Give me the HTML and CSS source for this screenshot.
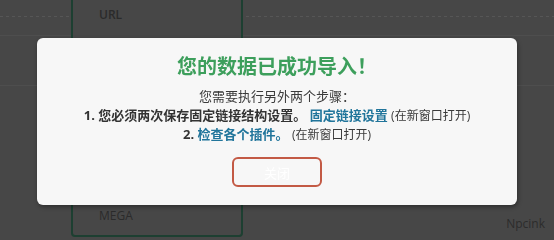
FILE: index.html
```html
<!DOCTYPE html>
<html lang="zh-CN">
<head>
<meta charset="utf-8">
<title>导入完成</title>
<link rel="stylesheet" href="styles.css">
</head>
<body>
<div class="page">
  <div class="row row-a"></div>
  <div class="row row-b"></div>
  <div class="card card-top"><span class="card-label">URL</span></div>
  <div class="card card-bottom"><span class="card-label">MEGA</span></div>
  <div class="mark">Npcink</div>
</div>

<div class="overlay">
  <div class="modal">
    <h2 class="modal-title">您的数据已成功导入！</h2>
    <div class="modal-body">
      <p class="line">您需要执行另外两个步骤：</p>
      <p class="line"><strong>1. 您必须两次保存固定链接结构设置。</strong> <a class="link" href="#">固定链接设置</a> <span class="note">(在新窗口打开)</span></p>
      <p class="line"><strong>2. <a class="link" href="#">检查各个插件。</a></strong> <span class="note">(在新窗口打开)</span></p>
    </div>
    <button class="btn" type="button">关闭</button>
  </div>
</div>
</body>
</html>
```

FILE: styles.css
```css
html, body {
  margin: 0;
  padding: 0;
  background: #474747;
  overflow: hidden;
}

body {
  font-family: "Open Sans", "Noto Sans CJK SC", sans-serif;
  color: #333;
}

.page {
  height: 240px;
  display: grid;
  grid-template-columns: 71px 172px 1fr;
  grid-template-rows: 36px 50px 1fr;
}

.row {
  grid-column: 1 / -1;
  border-bottom: 1px solid #4e4e4e;
}

.row-a {
  grid-row: 1;
  background-image: repeating-linear-gradient(to right, #565656 0 3px, transparent 3px 6px);
  background-size: 100% 1px;
  background-position: 0 16px;
  background-repeat: no-repeat;
}

.row-b {
  grid-row: 2;
}

.card {
  grid-column: 2;
  box-sizing: border-box;
  border: 2px solid #1d3f31;
  background: #474747;
  font-size: 12px;
  font-weight: 600;
  color: #2b2b2b;
  display: flex;
}

.card-label {
  padding-left: 26px;
}

.card-top {
  grid-row: 1 / 3;
  border-top: none;
  align-items: flex-start;
  padding-top: 6px;
}

.card-bottom {
  grid-row: 3;
  align-self: end;
  height: 60px;
  margin-bottom: 3px;
  border-radius: 0 0 4px 4px;
  align-items: flex-end;
  padding-bottom: 11px;
  font-weight: 400;
}

.mark {
  grid-column: 3;
  grid-row: 3;
  justify-self: end;
  align-self: end;
  margin: 0 9px 9px 0;
  font-size: 12px;
  color: #2c2c2c;
  line-height: 14px;
}

.overlay {
  position: fixed;
  inset: 0;
  display: flex;
  align-items: center;
  justify-content: center;
  padding-top: 3px;
  box-sizing: border-box;
}

.modal {
  width: 480px;
  box-sizing: border-box;
  padding: 16px 20px 18px;
  background: #f7f7f7;
  border-radius: 6px;
  box-shadow: 1px 2px 4px rgba(0, 0, 0, 0.35);
  text-align: center;
  display: flex;
  flex-direction: column;
  align-items: center;
}

.modal-title {
  margin: 0 0 7px;
  font-size: 20px;
  line-height: 26px;
  font-weight: 700;
  color: #3d9f5c;
}

.modal-body {
  font-size: 13px;
  line-height: 19px;
  color: #3a3a3a;
}

.line {
  margin: 0;
  white-space: nowrap;
}

.line strong {
  font-weight: 700;
  color: #333;
}

.link {
  color: #21759b;
  font-weight: 700;
  text-decoration: none;
}

.note {
  font-size: 12px;
  color: #3a3a3a;
}

.btn {
  margin-top: 13px;
  width: 90px;
  height: 30px;
  box-sizing: border-box;
  border: 2px solid #c35a45;
  border-radius: 6px;
  background: #f7f7f7;
  color: #ffffff;
  font-family: "Open Sans", "Noto Sans CJK SC", sans-serif;
  font-size: 13px;
  padding: 0;
}
```
